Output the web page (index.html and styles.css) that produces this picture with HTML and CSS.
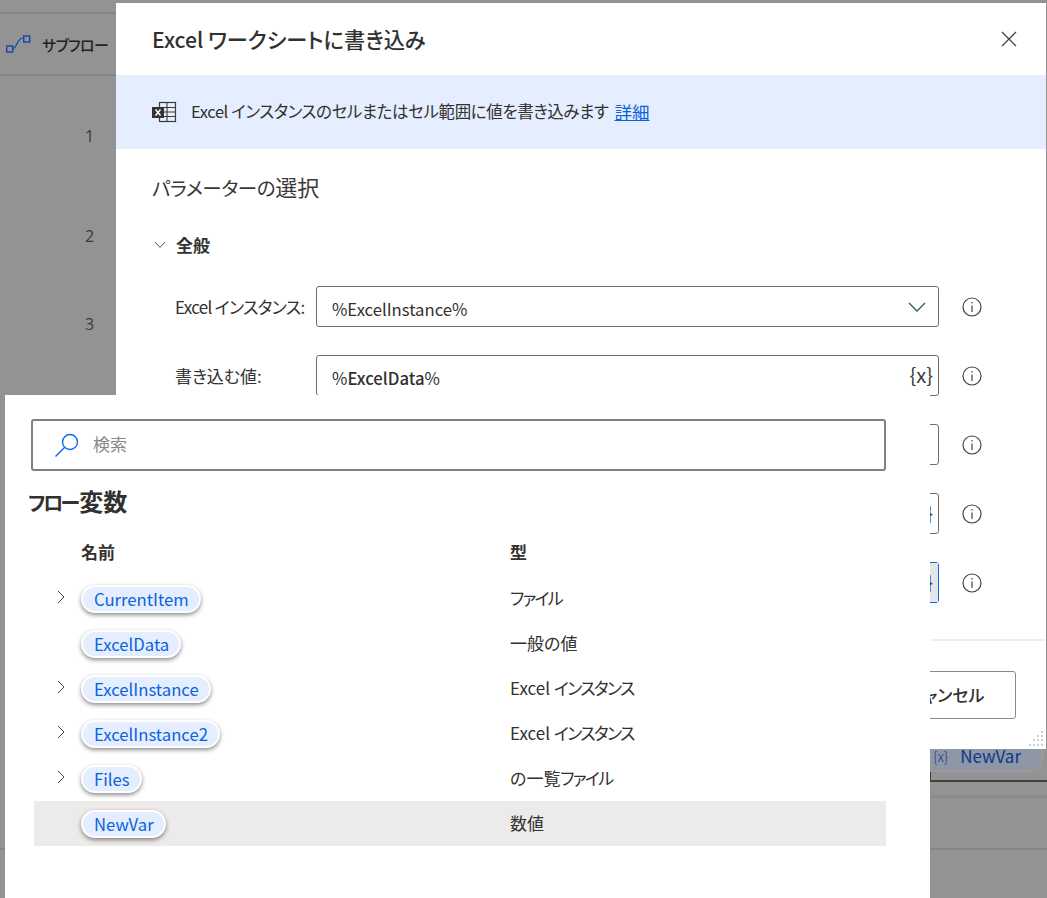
FILE: index.html
```html
<!DOCTYPE html>
<html lang="ja">
<head>
<meta charset="utf-8">
<title>Excel ワークシートに書き込み</title>
<link rel="stylesheet" href="styles.css">
</head>
<body>
<div class="backdrop">
  <div class="tabbar">
    <svg class="subflow-icon" width="26" height="20" viewBox="0 0 26 20"><rect x="1.700" y="12" width="6" height="6" fill="none" stroke="#1048b0" stroke-width="1.400"/><rect x="18.700" y="2" width="6" height="6" fill="none" stroke="#1048b0" stroke-width="1.400"/><path d="M8 14.500 C12 14 12 4 18 4" fill="none" stroke="#1048b0" stroke-width="1.200"/></svg>
    <span class="tab-label">サブフロー</span>
  </div>
  <ol class="step-numbers">
    <li class="num-1">1</li>
    <li class="num-2">2</li>
    <li class="num-3">3</li>
  </ol>
  <div class="var-chip"><span class="chip-x">{x}</span><span>NewVar</span></div>
  <div class="chip-line"></div>
  <div class="back-line-a"></div>
  <div class="back-line-b"></div>
</div>

<section class="dialog">
  <header class="dialog-head">
    <h1>Excel ワークシートに書き込み</h1>
    <svg class="close" width="16" height="16" viewBox="0 0 16 16"><path d="M1 1 L15 15 M15 1 L1 15" stroke="#444" stroke-width="1.300" fill="none"/></svg>
  </header>
  <div class="banner">
    <svg class="xl-icon" width="25" height="22" viewBox="0 0 25 22"><rect x="7.500" y="1.500" width="16" height="19" fill="none" stroke="#3a3a3a" stroke-width="1.200"/><path d="M15 1.500 V20.500 M7.500 6.500 H23.500 M7.500 11 H23.500 M7.500 15.500 H23.500" stroke="#3a3a3a" stroke-width="1.100" fill="none"/><rect x="0" y="6" width="12" height="11" fill="#333"/><path d="M3.500 8.500 L8.500 14.500 M8.500 8.500 L3.500 14.500" stroke="#fff" stroke-width="1.500"/></svg>
    <span class="banner-text">Excel インスタンスのセルまたはセル範囲に値を書き込みます</span>
    <a href="#" class="more">詳細</a>
  </div>
  <h2 class="param-title"><span class="param-kana">パラメーターの</span>選択</h2>
  <div class="section-head">
    <svg width="12" height="8" viewBox="0 0 12 8"><path d="M1 1 L6 6.500 L11 1" fill="none" stroke="#555" stroke-width="1"/></svg>
    <span>全般</span>
  </div>
  <div class="form">
    <div class="field">
      <label class="label-tight">Excel インスタンス:</label>
      <div class="input">
        <span class="val">%ExcelInstance%</span>
        <svg class="drop" width="18" height="10" viewBox="0 0 18 10"><path d="M1 1 L9 9 L17 1" fill="none" stroke="#1f6a4a" stroke-width="1.300"/></svg>
      </div>
      <svg class="info" width="20" height="20" viewBox="0 0 20 20"><circle cx="10" cy="10" r="9" fill="none" stroke="#444" stroke-width="1.200"/><path d="M10 8.500 V15 M10 5 V6.500" stroke="#444" stroke-width="1.200"/></svg>
    </div>
    <div class="field">
      <label>書き込む値:</label>
      <div class="input">
        <span class="val">%<b>ExcelData</b>%</span>
        <span class="var-btn">{x}</span>
      </div>
      <svg class="info" width="20" height="20" viewBox="0 0 20 20"><circle cx="10" cy="10" r="9" fill="none" stroke="#444" stroke-width="1.200"/><path d="M10 8.500 V15 M10 5 V6.500" stroke="#444" stroke-width="1.200"/></svg>
    </div>
    <div class="field">
      <label></label>
      <div class="input"></div>
      <svg class="info" width="20" height="20" viewBox="0 0 20 20"><circle cx="10" cy="10" r="9" fill="none" stroke="#444" stroke-width="1.200"/><path d="M10 8.500 V15 M10 5 V6.500" stroke="#444" stroke-width="1.200"/></svg>
    </div>
    <div class="field">
      <label></label>
      <div class="input"><span class="var-btn">{x}</span></div>
      <svg class="info" width="20" height="20" viewBox="0 0 20 20"><circle cx="10" cy="10" r="9" fill="none" stroke="#444" stroke-width="1.200"/><path d="M10 8.500 V15 M10 5 V6.500" stroke="#444" stroke-width="1.200"/></svg>
    </div>
    <div class="field">
      <label></label>
      <div class="input focused"><span class="var-btn active">{x}</span></div>
      <svg class="info" width="20" height="20" viewBox="0 0 20 20"><circle cx="10" cy="10" r="9" fill="none" stroke="#444" stroke-width="1.200"/><path d="M10 8.500 V15 M10 5 V6.500" stroke="#444" stroke-width="1.200"/></svg>
    </div>
  </div>
  <footer class="dialog-foot">
    <button class="cancel" type="button">キャンセル</button>
    <svg class="grip" width="16" height="17" viewBox="0 0 16 17"><g fill="#c9cfdf"><rect x="13" y="1" width="2" height="2"/><rect x="13" y="5" width="2" height="2"/><rect x="9" y="5" width="2" height="2"/><rect x="13" y="9" width="2" height="2"/><rect x="9" y="9" width="2" height="2"/><rect x="5" y="9" width="2" height="2"/><rect x="13" y="14" width="2" height="2"/><rect x="9" y="14" width="2" height="2"/><rect x="5" y="14" width="2" height="2"/><rect x="1" y="14" width="2" height="2"/></g></svg>
  </footer>
</section>

<section class="picker">
  <div class="search">
    <svg width="26" height="26" viewBox="0 0 26 26"><circle cx="16" cy="10" r="7.500" fill="none" stroke="#0b6af0" stroke-width="1.400"/><path d="M10.500 15.500 L1.500 24.500" stroke="#0b6af0" stroke-width="1.400"/></svg>
    <span class="search-text">検索</span>
  </div>
  <h2 class="picker-title"><span class="title-kana">フロー</span>変数</h2>
  <div class="table">
    <div class="row head"><span class="tw"></span><span class="name-col">名前</span><span class="type-col">型</span></div>
    <div class="row"><span class="tw"><svg width="8" height="14" viewBox="0 0 8 14"><path d="M1 1 L7 7 L1 13" fill="none" stroke="#444" stroke-width="1"/></svg></span><span class="name-col"><span class="pill">CurrentItem</span></span><span class="type-col"><span class="kana">ファイル</span></span></div>
    <div class="row"><span class="tw"></span><span class="name-col"><span class="pill">ExcelData</span></span><span class="type-col">一般の値</span></div>
    <div class="row"><span class="tw"><svg width="8" height="14" viewBox="0 0 8 14"><path d="M1 1 L7 7 L1 13" fill="none" stroke="#444" stroke-width="1"/></svg></span><span class="name-col"><span class="pill">ExcelInstance</span></span><span class="type-col">Excel <span class="kana">インスタンス</span></span></div>
    <div class="row"><span class="tw"><svg width="8" height="14" viewBox="0 0 8 14"><path d="M1 1 L7 7 L1 13" fill="none" stroke="#444" stroke-width="1"/></svg></span><span class="name-col"><span class="pill">ExcelInstance2</span></span><span class="type-col">Excel <span class="kana">インスタンス</span></span></div>
    <div class="row"><span class="tw"><svg width="8" height="14" viewBox="0 0 8 14"><path d="M1 1 L7 7 L1 13" fill="none" stroke="#444" stroke-width="1"/></svg></span><span class="name-col"><span class="pill">Files</span></span><span class="type-col">の一覧<span class="kana">ファイル</span></span></div>
    <div class="row selected"><span class="tw"></span><span class="name-col"><span class="pill">NewVar</span></span><span class="type-col">数値</span></div>
  </div>
</section>
</body>
</html>
```

FILE: styles.css
```css
* { box-sizing: border-box; }
html, body { margin: 0; height: 100%; }
body {
  width: 1047px;
  height: 898px;
  overflow: hidden;
  position: relative;
  background: #939393;
  font-family: "Noto Sans CJK JP", "Open Sans", sans-serif;
  font-feature-settings: "palt";
  color: #323130;
  font-size: 17px;
}
.backdrop { position: absolute; inset: 0; }
.tabbar {
  position: absolute;
  left: 0; top: 12px;
  width: 116px; height: 64px;
  border-top: 2px solid #868686;
  border-bottom: 2px solid #868686;
  display: flex;
  align-items: center;
  padding-left: 5px;
  gap: 11px;
}
.tab-label { font-size: 15px; letter-spacing: -0.600px; font-weight: 500; color: #222; white-space: nowrap; }
.step-numbers { list-style: none; margin: 0; padding: 0; color: #3a3a3a; font-size: 16px; font-family: "Open Sans", sans-serif; }
.step-numbers li { position: absolute; left: 85px; }
.num-1 { top: 125px; }
.num-2 { top: 225px; }
.num-3 { top: 313px; }
.var-chip {
  position: absolute;
  left: 900px; top: 735px;
  width: 143px; height: 37px;
  padding: 4px 0 0 31px;
  background: #8f96a6;
  border: 2px solid #9a9a9a;
  border-radius: 0 0 12px 12px;
  color: #0a3a8a;
  font-size: 17px;
  display: flex;
  align-items: center;
  gap: 12px;
}
.chip-x { font-size: 14px; font-weight: 300; }
.chip-line { position: absolute; left: 930px; top: 772px; width: 117px; height: 10px; border-left: 1px solid #3f3f3f; border-bottom: 2px solid #3f3f3f; }
.back-line-a { position: absolute; left: 930px; right: 0; top: 795px; height: 3px; background: #8b8b8b; }
.back-line-b { position: absolute; left: 0; right: 0; top: 848px; height: 2px; background: #858585; }

.dialog {
  position: absolute;
  left: 116px; top: 3px;
  width: 930px; height: 746px;
  background: #fff;
  display: flex;
  flex-direction: column;
}
.dialog-head {
  height: 72px;
  flex: none;
  display: flex;
  align-items: center;
  justify-content: space-between;
  padding: 0 29px 0 36px;
}
.dialog-head h1 { margin: 0 0 2px; font-size: 21.200px; font-weight: 500; color: #323130; }
.banner {
  height: 74px;
  flex: none;
  background: #e4eefe;
  display: flex;
  align-items: center;
  padding: 0 0 2px 36px;
  color: #323130;
}
.banner-text { font-size: 16.500px; letter-spacing: -0.400px; white-space: nowrap; }
.xl-icon { margin: 2px 14px 0 0; }
.more { color: #0b62d6; margin-left: 6px; text-decoration: underline; font-size: 17.500px; }
.param-title { margin: 22px 0 0 36px; font-size: 22px; font-weight: 400; line-height: 30px; color: #3a3938; }
.param-kana { font-size: 19.500px; letter-spacing: -0.400px; }
.section-head {
  margin: 30px 0 0 38px;
  display: flex;
  align-items: center;
  gap: 10px;
  font-size: 17px;
  font-weight: 700;
  line-height: 24px;
}
.form { margin-top: 29px; padding-left: 59px; display: flex; flex-direction: column; gap: 28px; }
.field { display: flex; align-items: center; height: 41px; }
.field label { width: 141px; flex: none; white-space: nowrap; }
.field .label-tight { letter-spacing: -0.700px; }
.input {
  width: 623px;
  height: 41px;
  flex: none;
  border: 1px solid #6e6e6e;
  border-radius: 3px;
  padding: 0 5px 0 15px;
  display: flex;
  align-items: center;
  justify-content: space-between;
}
.val { font-size: 16.700px; margin-top: 4px; }
.val b { font-weight: 500; }
.input.focused { border-color: #0b6af0; }
.var-btn {
  margin: 0 -5px 0 auto;
  padding: 0 5px 2px;
  align-self: stretch;
  display: flex;
  align-items: center;
  font-size: 20px;
  color: #3a3a3a;
}
.var-btn.active { background: #e5e5e5; }
.drop { margin-right: 7px; }
.info { margin-left: 23px; flex: none; }
.dialog-foot {
  margin-top: auto;
  height: 110px;
  flex: none;
  border-top: 2px solid #eeeeee;
  position: relative;
  display: flex;
  justify-content: flex-end;
  padding: 30px 30px 0 0;
}
.cancel {
  width: 140px; height: 48px;
  padding-bottom: 3px;
  background: #fff;
  border: 1px solid #8a8a8a;
  border-radius: 3px;
  font: 500 17px "Noto Sans CJK JP", sans-serif;
  font-feature-settings: "palt";
  color: #323130;
}
.grip { position: absolute; right: 2px; bottom: 2px; }

.picker {
  position: absolute;
  left: 5px; top: 395px;
  width: 925px; height: 503px;
  background: #fff;
}
.search {
  position: absolute;
  left: 26px; top: 24px;
  width: 855px; height: 52px;
  border: 2px solid #808080;
  border-radius: 3px;
  display: flex;
  align-items: center;
  padding-left: 21px;
  gap: 13px;
  color: #8a8a8a;
}
.search-text { margin-bottom: 3px; }
.picker-title {
  position: absolute;
  left: 23px; top: 89px;
  margin: 0;
  font-size: 24px;
  font-weight: 700;
  line-height: 34px;
  color: #323130;
}
.title-kana { font-size: 20px; letter-spacing: -2.500px; margin-right: 1.500px; }
.table { position: absolute; left: 29px; top: 135px; width: 852px; }
.row { display: flex; align-items: center; height: 45px; }
.row.head { height: 46px; font-weight: 700; }
.row.head .name-col, .row.head .type-col { padding-bottom: 4px; }
.tw { width: 47px; padding-left: 23px; flex: none; display: flex; margin-top: -4px; }
.name-col { width: 429px; flex: none; }
.type-col { flex: 1; padding-bottom: 2px; }
.kana { letter-spacing: -1.700px; }
.row.selected { background: #ecebe9; height: 45px; }
.pill {
  display: inline-block;
  padding: 0 10px 0 11px;
  height: 28px;
  line-height: 24px;
  border-radius: 14px;
  background: #e4eefe;
  border: 2px solid #fff;
  box-shadow: 0 2px 4px rgba(0,0,0,.45);
  color: #0b62e0;
  font-size: 16.700px;
}
```
